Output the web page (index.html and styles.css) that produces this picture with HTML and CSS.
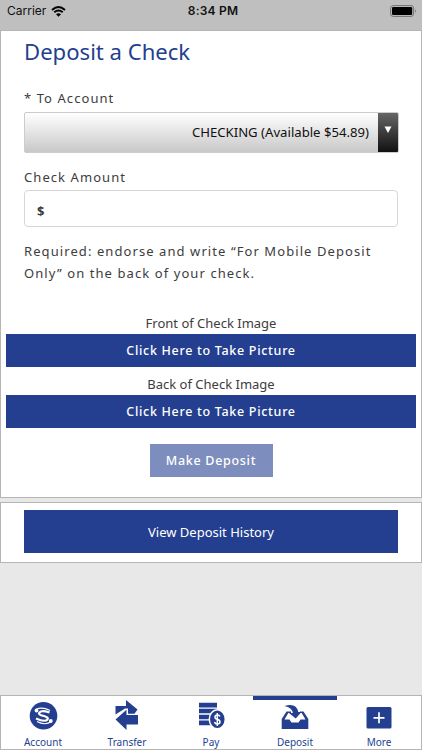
FILE: index.html
```html
<!DOCTYPE html>
<html lang="en">
<head>
<meta charset="utf-8">
<title>Deposit a Check</title>
<link rel="stylesheet" href="styles.css">
</head>
<body>
<header class="status">
  <div class="carrier"><span>Carrier</span>
    <svg class="wifi" width="15" height="11" viewBox="0 0 15 11"><path d="M1 4Q7.5-1.8 14 4M3.3 6.3Q7.5 2.8 11.7 6.3" fill="none" stroke="#000" stroke-width="1.9"/><path d="M5 8.2Q7.5 6.2 10 8.2L7.5 10.8Z"/></svg>
  </div>
  <time>8:34 PM</time>
  <svg class="battery" width="27" height="12" viewBox="0 0 27 12"><rect x=".6" y=".6" width="23" height="10.8" rx="2.6" fill="none" stroke="#707070"/><rect x="2" y="2" width="20.2" height="8" rx="1.2"/><path d="M25 4Q26.8 6 25 8Z" fill="#707070"/></svg>
</header>
<main class="content">
  <section class="card form">
    <h1>Deposit a Check</h1>
    <div class="label to">* To Account</div>
    <div class="select"><span class="value">CHECKING (Available $54.89)</span><span class="arrow"><svg width="8" height="8" viewBox="0 0 8 8"><path d="M.5.5H7.5L4 7Z" fill="#fff"/></svg></span></div>
    <div class="label amount">Check Amount</div>
    <div class="input">$</div>
    <p class="note">Required: endorse and write “For Mobile Deposit<br>Only” on the back of your check.</p>
    <div class="caption front">Front of Check Image</div>
    <button class="picture">Click Here to Take Picture</button>
    <div class="caption back">Back of Check Image</div>
    <button class="picture">Click Here to Take Picture</button>
    <button class="make">Make Deposit</button>
  </section>
  <section class="card history"><button class="view">View Deposit History</button></section>
</main>
<nav class="tabs">
  <a class="tab"><svg width="30" height="30" viewBox="0 0 30 30"><circle cx="15.5" cy="15.8" r="13.8" fill="#243f8f"/><g fill="none" stroke="#fff"><path d="M21.5 12.5Q12 9.5 11 13.5Q11 15 16 16Q21 17.5 19.5 19.5Q17 22.5 8 18.5" stroke-width="2.2"/><path d="M8 9.5Q14 6.5 22 10.5M9 21.5Q17 26 23.5 21.5" stroke-width="1.2"/></g><circle cx="8.5" cy="10.5" r="1.9" fill="#fff"/><circle cx="22.8" cy="21" r="1.9" fill="#fff"/></svg><span>Account</span></a>
  <a class="tab"><svg width="30" height="30" viewBox="0 0 30 30"><path d="M3.5 6H14V0L25.5 9.5L22.5 13.7H16V8.5H13L3.5 14.5ZM3.5 19.5L14.5 9.8V15H26V24.5H14.5V30Z" fill="#243f8f"/></svg><span>Transfer</span></a>
  <a class="tab"><svg width="30" height="30" viewBox="0 0 30 30"><path d="M3 2.8H21V7.5H3ZM3 8.8H21V13.3H3ZM3 14.7H18V19.2H3ZM3 20.6H18V25.2H3Z" fill="#243f8f"/><ellipse cx="21.3" cy="19.3" rx="8" ry="9.5" fill="#243f8f" stroke="#fff" stroke-width="1.5"/><path d="M24 16.5Q23.5 15 21.3 15Q19 15 19 17Q19 19 21.3 19.3Q24 20 24 22Q24 24 21.3 24Q19 24 18.5 22M21.3 13V26" fill="none" stroke="#fff" stroke-width="1.5"/></svg><span>Pay</span></a>
  <a class="tab active"><svg width="30" height="30" viewBox="0 0 30 30"><path d="M6.5 11.5H23.5L28.300 19V29H1.700V19Z" fill="#243f8f"/><path d="M8.300 13H21.700L25.500 19.500H20.500L18.500 22.500H11.500L9.500 19.500H4.500Z" fill="#fff"/><path d="M11 10H20V13H11Z" fill="#fff"/><path d="M4.500 6Q16.500 2.500 18.300 12H21.500L15.700 18.500L9 13H12.800Q12 7.500 4.500 6Z" fill="#243f8f"/></svg><span>Deposit</span></a>
  <a class="tab"><svg width="30" height="30" viewBox="0 0 30 30"><rect x="2.5" y="7" width="25" height="21.5" rx="1.5" fill="#243f8f"/><path d="M15 12.3V23.3M9.5 17.8H20.5" stroke="#fff" stroke-width="1.7"/></svg><span>More</span></a>
</nav>
</body>
</html>
```
FILE: styles.css
```css
* { box-sizing: border-box; }
body { margin: 0; width: 422px; height: 750px; display: flex; flex-direction: column; background: #e8e8e8; color: #3d3d3d; font-family: "Noto Sans", sans-serif; font-size: 13px; overflow: hidden; }
.status { height: 30px; padding: 0 5px 8px 7px; display: grid; grid-template-columns: 1fr auto 1fr; align-items: center; background: #bfbfbf; color: #111; font: 12px/14px Inter, sans-serif; letter-spacing: 0; }
.carrier { display: flex; align-items: center; gap: 5px; }
.status time { font-weight: 600; letter-spacing: .2px; padding-left: 2px; }
.battery { justify-self: end; }
.content { flex: 1; display: flex; flex-direction: column; gap: 4px; }
.card { background: #fff; border: 1px solid #b5b5b5; display: flex; flex-direction: column; }
.form { height: 468px; padding: 0 5px; }
h1 { margin: 4px 18px 0; font-size: 22.1px; line-height: 32px; font-weight: 400; color: #243f8f; }
.label { margin-left: 18px; line-height: 20px; letter-spacing: 1.07px; }
.to { margin-top: 21px; }
.select { height: 41px; margin: 4px 17px 0 18px; display: flex; border: 1px solid #ccc; border-radius: 2px; background: linear-gradient(#fff, #c8c8c8); overflow: hidden; color: #111; }
.value { flex: 1; text-align: right; padding-right: 9px; line-height: 39px; font-size: 13.15px; }
.arrow { width: 20px; background: linear-gradient(#666, #111); display: flex; justify-content: center; padding-top: 13px; }
.amount { margin-top: 14px; }
.input { margin: 3px 18px 0; height: 37px; border: 1px solid #d6d6d6; border-radius: 4px; padding-left: 12px; line-height: 40px; font-weight: 700; }
.note { margin: 13px 18px 0; line-height: 22px; letter-spacing: 1.08px; white-space: nowrap; }
.caption { text-align: center; line-height: 20px; }
.front { margin-top: 29px; }
.back { margin-top: 7px; }
button { border: 0; border-radius: 0; background: #243f8f; color: #fff; font: 13px/20px "Noto Sans", sans-serif; padding: 0; }
.picture { height: 33px; margin-top: 1px; padding-top: 1px; font-size: 12.5px; font-weight: 500; letter-spacing: .7px; }
.make { width: 123px; height: 33px; align-self: center; margin-top: 16px; padding-top: 1px; background: #7d8dbd; font-size: 12.5px; font-weight: 500; letter-spacing: .7px; }
.history { height: 61px; padding: 7px 23px; }
.view { height: 43px; }
.tabs { height: 55px; display: grid; grid-template-columns: repeat(5, 1fr); background: #fff; border: 1px solid #b5b5b5; }
.tab { display: flex; flex-direction: column; align-items: center; padding-top: 4px; border-top: 0 solid #243f8f; color: #243f8f; font-size: 10px; line-height: 14px; }
.tab span { margin-top: 5px; }
.active { border-top-width: 4px; padding-top: 0; }
```
